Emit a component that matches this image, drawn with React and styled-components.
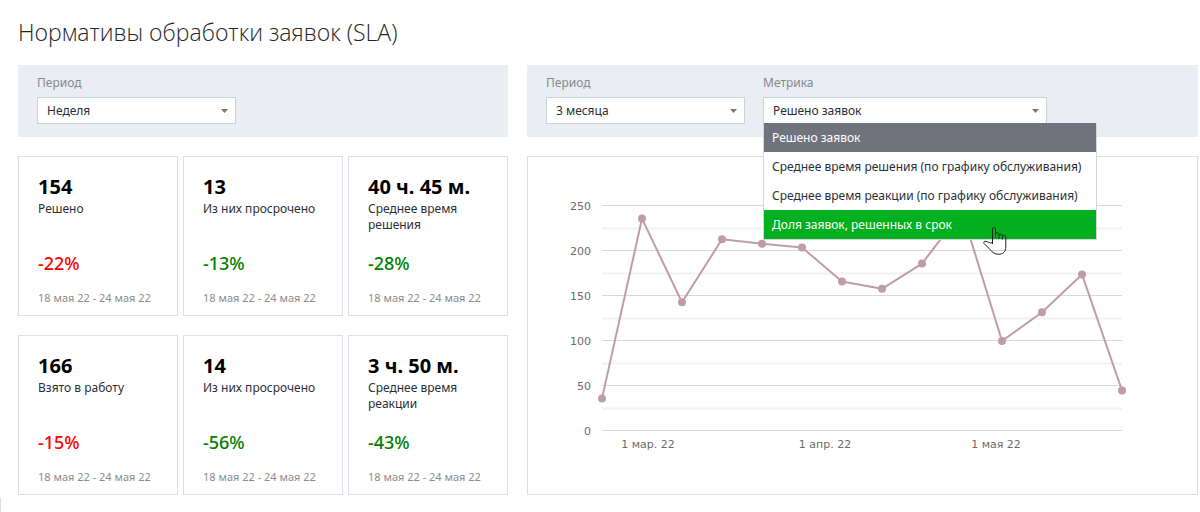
import { useState } from "react";
import styled, { createGlobalStyle } from "styled-components";

const GlobalStyle = createGlobalStyle`
  *, *::before, *::after {
    box-sizing: border-box;
  }

  body {
    margin: 0;
    background: #fff;
    color: #2a3036;
    font-family: "Noto Sans", "Open Sans", sans-serif;
    font-size: 12px;
    line-height: 16px;
  }
`;

const Page = styled.div`
  display: flex;
  flex-direction: column;
  min-height: 100vh;
`;

const Main = styled.main`
  padding: 16px 2px 0 18px;
`;

const Title = styled.h1`
  margin: 0 0 17px;
  color: #22262a;
  font-family: "Open Sans", sans-serif;
  font-size: 23px;
  font-weight: 300;
  line-height: 32px;
`;

const Columns = styled.div`
  display: grid;
  grid-template-columns: 490fr 671fr;
  gap: 19px;
`;

const Column = styled.section`
  display: flex;
  flex-direction: column;
  gap: 19px;
  min-width: 0;
`;

const FilterBar = styled.div`
  display: flex;
  gap: 18px;
  padding: 10px 19px 13px;
  background: #eaedf2;
`;

const Field = styled.div`
  position: relative;
  width: ${(props) => (props.$wide ? "284px" : "199px")};
`;

const FieldLabel = styled.label`
  display: block;
  margin-bottom: 6px;
  color: #84898f;
`;

const SelectBox = styled.div`
  display: grid;
  align-items: center;

  & > * {
    grid-area: 1 / 1;
  }

  svg {
    justify-self: end;
    margin-right: 8px;
    pointer-events: none;
  }
`;

const Select = styled.select`
  appearance: none;
  width: 100%;
  height: 27px;
  padding: 0 24px 0 9px;
  border: 1px solid #c9d3de;
  border-radius: 0;
  background: #fff;
  color: #2a3036;
  font: inherit;
  outline: none;
`;

const Menu = styled.ul`
  position: absolute;
  top: calc(100% - 1px);
  left: 0;
  z-index: 1;
  margin: 0;
  padding: 0;
  border: 1px solid #d5d7da;
  border-top: 0;
  background: #fff;
  list-style: none;
  white-space: nowrap;
`;

const optionColors = {
  selected: "background: #70727e; color: #fff;",
  active: "background: #00b01e; color: #fff;",
};

const MenuItem = styled.li`
  padding: 7px 15px 6px 8px;
  cursor: pointer;
  ${(props) => optionColors[props.$state]}
`;

const Pointer = styled.svg`
  position: absolute;
  right: 87px;
  bottom: -17px;
  pointer-events: none;
`;

const Cards = styled.div`
  display: grid;
  grid-template-columns: repeat(3, 1fr);
  gap: 19px 5px;
`;

const Card = styled.article`
  display: flex;
  flex-direction: column;
  min-height: 160px;
  padding: 17px 18px 8px 19px;
  border: 1px solid #dbe0e7;
`;

const CardValue = styled.strong`
  margin-bottom: 1px;
  color: #000;
  font-size: 20px;
  font-weight: 700;
  line-height: 26px;
`;

const CardLabel = styled.span`
  min-height: 32px;
`;

const CardChange = styled.span`
  margin: 18px 0 15px;
  color: ${(props) => (props.$bad ? "#f00" : "#008000")};
  font-size: 18px;
  font-weight: 500;
  line-height: 24px;
`;

const CardDates = styled.span`
  color: #8c8c8c;
  font-size: 11px;
  white-space: nowrap;
`;

const ChartCard = styled.div`
  flex: 1;
  border: 1px solid #dbe0e7;

  svg {
    display: block;
    width: 100%;
    height: auto;
  }

  text {
    fill: #6b6b6b;
    font-family: "DejaVu Sans", sans-serif;
    font-size: 11px;
  }
`;

const Footer = styled.footer`
  flex: 1;
  min-height: 13px;
  margin-top: 3px;
  border-left: 1px solid #dbe0e7;
`;

const DATES = "18 мая 22 - 24 мая 22";

const cards = [
  { value: "154", label: "Решено", change: "-22%", bad: true },
  { value: "13", label: "Из них просрочено", change: "-13%" },
  { value: "40 ч. 45 м.", label: "Среднее время решения", change: "-28%" },
  { value: "166", label: "Взято в работу", change: "-15%", bad: true },
  { value: "14", label: "Из них просрочено", change: "-56%" },
  { value: "3 ч. 50 м.", label: "Среднее время реакции", change: "-43%" },
];

const metrics = [
  "Решено заявок",
  "Среднее время решения (по графику обслуживания)",
  "Среднее время реакции (по графику обслуживания)",
  "Доля заявок, решенных в срок",
];

const series = [36, 236, 143, 213, 208, 204, 166, 158, 186, 244, 100, 132, 174, 45];

const months = [
  { label: "1 мар. 22", x: 120 },
  { label: "1 апр. 22", x: 297 },
  { label: "1 мая 22", x: 468 },
];

const PLOT_LEFT = 74;
const PLOT_RIGHT = 594;
const PLOT_BOTTOM = 274;

const toX = (i) => PLOT_LEFT + i * 40;
const toY = (value) => PLOT_BOTTOM - value * 0.9;

function Arrow() {
  return (
    <svg width="7" height="4" viewBox="0 0 7 4" aria-hidden="true">
      <path d="M0 0H7L3.5 4Z" fill="#777" />
    </svg>
  );
}

function PeriodField({ id, options }) {
  return (
    <Field>
      <FieldLabel htmlFor={id}>Период</FieldLabel>
      <SelectBox>
        <Select id={id}>
          {options.map((option) => (
            <option key={option}>{option}</option>
          ))}
        </Select>
        <Arrow />
      </SelectBox>
    </Field>
  );
}

function MetricField() {
  const [open, setOpen] = useState(true);
  const [metric, setMetric] = useState(metrics[0]);
  const [active, setActive] = useState(metrics[3]);

  function handleMouseDown(e) {
    // keep the native popup closed, the list below replaces it
    e.preventDefault();
    setOpen(!open);
  }

  function handlePick(option) {
    setMetric(option);
    setOpen(false);
  }

  function stateOf(option) {
    if (option === active) return "active";
    if (option === metric) return "selected";
    return undefined;
  }

  return (
    <Field $wide>
      <FieldLabel htmlFor="metric">Метрика</FieldLabel>
      <SelectBox>
        <Select
          id="metric"
          value={metric}
          onMouseDown={handleMouseDown}
          onChange={(e) => setMetric(e.target.value)}
        >
          {metrics.map((option) => (
            <option key={option}>{option}</option>
          ))}
        </Select>
        <Arrow />
      </SelectBox>
      {open && (
        <Menu role="listbox" aria-label="Метрика">
          {metrics.map((option) => (
            <MenuItem
              key={option}
              role="option"
              aria-selected={option === metric}
              $state={stateOf(option)}
              onMouseEnter={() => setActive(option)}
              onClick={() => handlePick(option)}
            >
              {option}
            </MenuItem>
          ))}
          <Pointer width="26" height="30" viewBox="0 0 26 30" aria-hidden="true">
            <path
              d="M9.5 18V3C9.5 1 12.5 1 12.5 3V12.5M12.5 7.5C13 6.4 16 6.6 16 8.4V13M16 8.8C16.6 7.8 19.4 8 19.4 9.8V13.5M19.4 10C20.2 9 22.8 9.4 22.8 11.4V21C22.8 25.5 20 28.3 15.5 28.3C11.8 28.3 9.4 26.4 7.2 23.6L1 17.4C.2 16 1.4 15 3 15.4C5.4 16 7.4 17.4 9.5 16.8"
              fill="none"
              stroke="#222"
              strokeWidth="1"
              strokeLinejoin="round"
            />
          </Pointer>
        </Menu>
      )}
    </Field>
  );
}

function Chart() {
  return (
    <svg viewBox="0 0 669 337" role="img" aria-label="Решено заявок">
      {[25, 75, 125, 175, 225].map((v) => (
        <path key={v} d={`M${PLOT_LEFT} ${toY(v)}H${PLOT_RIGHT}`} stroke="#f2f2f2" strokeWidth="2" />
      ))}
      {[0, 50, 100, 150, 200, 250].map((v) => (
        <g key={v}>
          <path d={`M${PLOT_LEFT} ${toY(v) - 0.5}H${PLOT_RIGHT}`} stroke="#d8d8d8" />
          <text x="63" y={toY(v) + 4} textAnchor="end">
            {v}
          </text>
        </g>
      ))}
      {months.map((month) => (
        <text key={month.label} x={month.x} y="291" textAnchor="middle">
          {month.label}
        </text>
      ))}
      <polyline
        points={series.map((v, i) => `${toX(i)},${toY(v)}`).join(" ")}
        fill="none"
        stroke="#c09ca8"
        strokeWidth="2"
        strokeLinejoin="round"
      />
      {series.map((v, i) => (
        <circle key={i} cx={toX(i)} cy={toY(v)} r="4" fill="#c09ca8" />
      ))}
    </svg>
  );
}

function App() {
  return (
    <>
      <GlobalStyle />
      <Page>
        <Main>
          <Title>Нормативы обработки заявок (SLA)</Title>
          <Columns>
            <Column>
              <FilterBar>
                <PeriodField id="cards-period" options={["Неделя", "Месяц"]} />
              </FilterBar>
              <Cards>
                {cards.map((card, i) => (
                  <Card key={i}>
                    <CardValue>{card.value}</CardValue>
                    <CardLabel>{card.label}</CardLabel>
                    <CardChange $bad={card.bad}>{card.change}</CardChange>
                    <CardDates>{DATES}</CardDates>
                  </Card>
                ))}
              </Cards>
            </Column>
            <Column>
              <FilterBar>
                <PeriodField id="chart-period" options={["3 месяца", "6 месяцев"]} />
                <MetricField />
              </FilterBar>
              <ChartCard>
                <Chart />
              </ChartCard>
            </Column>
          </Columns>
        </Main>
        <Footer />
      </Page>
    </>
  );
}

export default App;
